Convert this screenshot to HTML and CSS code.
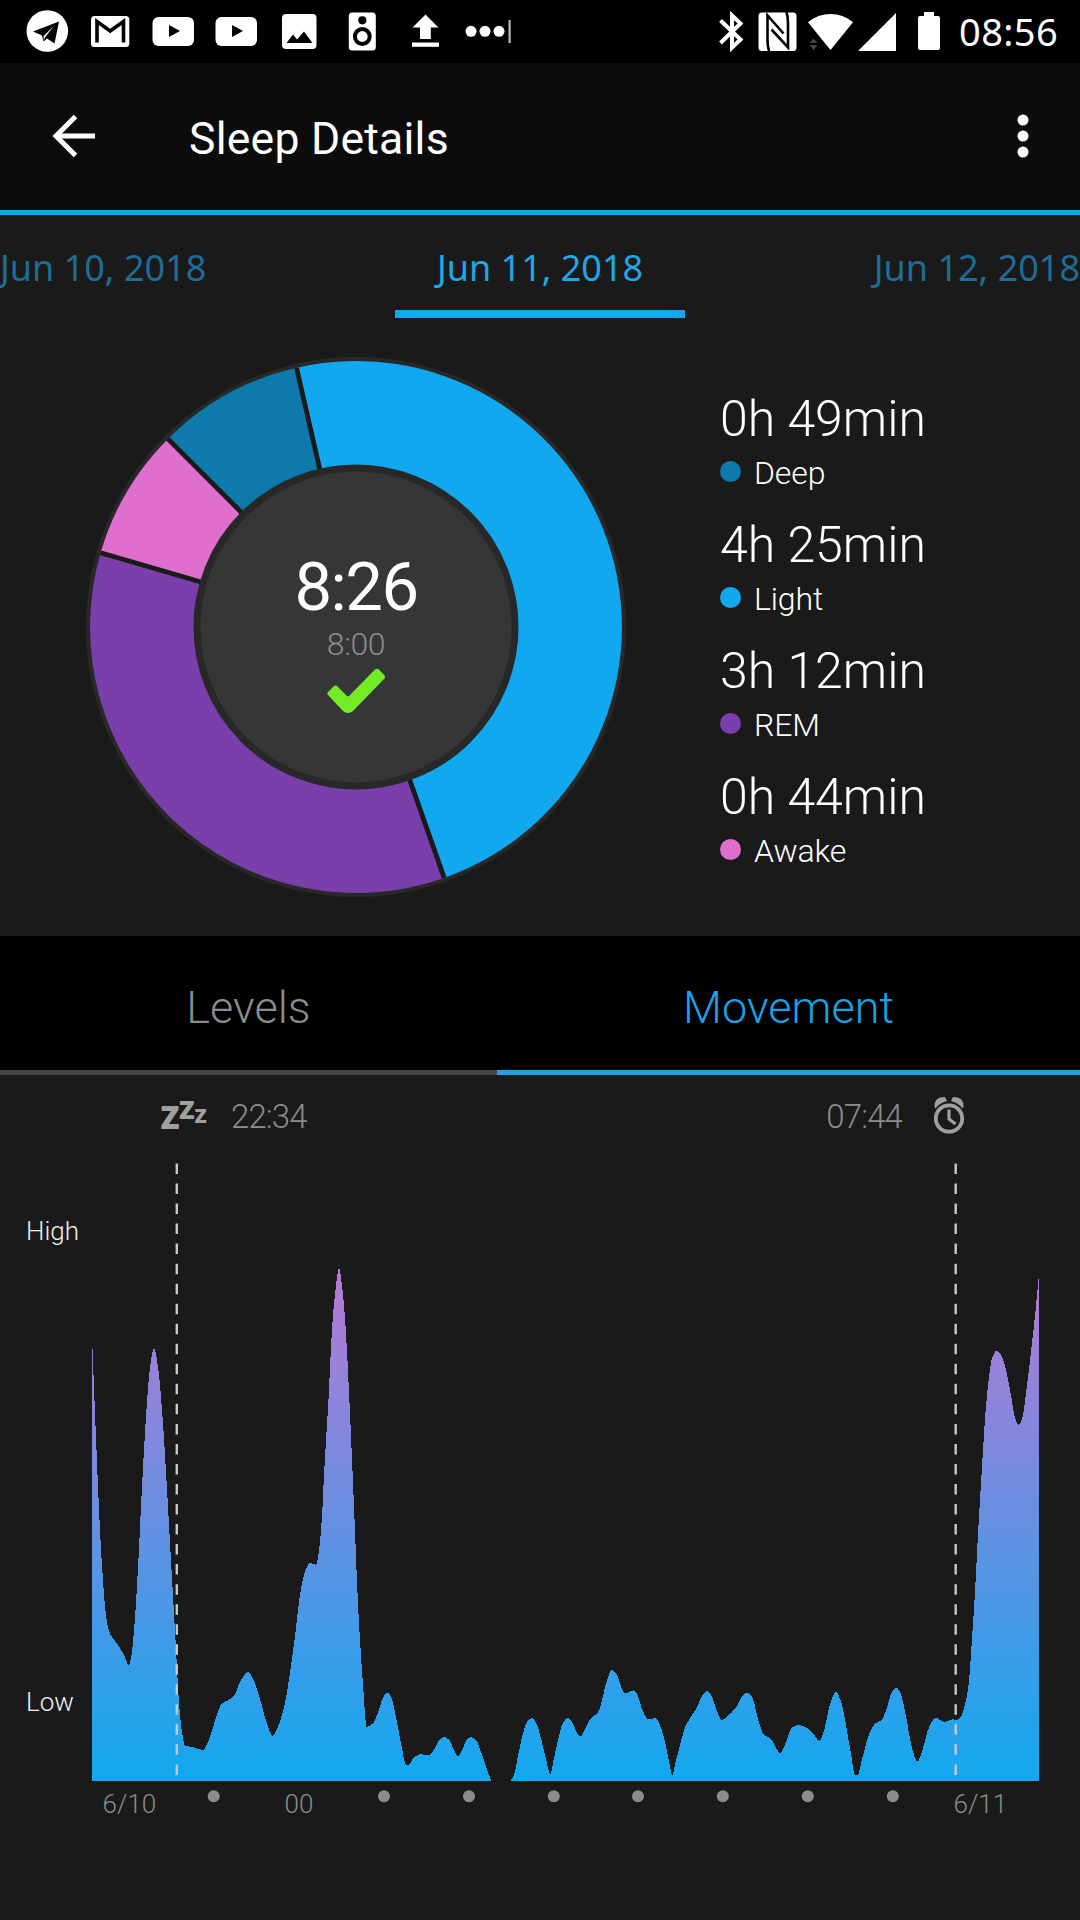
FILE: index.html
```html
<!DOCTYPE html>
<html lang="en">
<head>
    <meta charset="UTF-8">
    <meta name="viewport" content="width=device-width, initial-scale=1.0">
    <title>Sleep Details</title>
    <link rel="stylesheet" href="styles.css">
</head>
<body>
    <div class="status-bar">
        <svg class="status-icons" width="520" height="63" viewBox="0 0 520 63" fill="#fff">
            <!-- telegram -->
            <circle cx="47.3" cy="31" r="20.8"/>
            <path d="M33 31.5 L59 21.5 L54.5 43.5 L47 38.5 L43.5 41.5 L42 35.5 Z" fill="#000"/>
            <path d="M43.6 36 L54 26 L45 37.2 L43.8 40.5 Z"/>
            <!-- mail -->
            <rect x="91" y="16" width="38.3" height="31" rx="3.5"/>
            <path d="M97 42.5 V21.5 L110.2 31 L123.5 21.5 V42.5" fill="none" stroke="#000" stroke-width="3.6"/>
            <!-- video -->
            <rect x="152.5" y="17" width="41.5" height="29" rx="6"/>
            <path d="M169 25 L180 31 L169 37 Z" fill="#000"/>
            <rect x="215.5" y="17" width="41.5" height="29" rx="6"/>
            <path d="M232 25 L243 31 L232 37 Z" fill="#000"/>
            <!-- picture -->
            <rect x="282" y="14" width="34.5" height="35" rx="4"/>
            <path d="M286.5 43 L293 34.5 L297 39.5 L304 31.5 L312.5 43 Z" fill="#000"/>
            <!-- speaker -->
            <rect x="348.8" y="12.5" width="27" height="38" rx="3.5"/>
            <circle cx="362.3" cy="20.3" r="4.1" fill="#000"/>
            <circle cx="362.3" cy="36.5" r="7.4" stroke="#000" stroke-width="4"/>
            <!-- upload -->
            <path d="M425.5 14.5 L438.5 27.5 H430.8 V39 H420 V27.5 H412.5 Z"/>
            <rect x="412" y="42.5" width="27" height="4.3"/>
            <!-- overflow -->
            <circle cx="471" cy="31.3" r="5.5"/>
            <circle cx="485" cy="31.3" r="5.5"/>
            <circle cx="499" cy="31.3" r="5.5"/>
            <rect x="508.5" y="20" width="2.2" height="23" fill="#bbb"/>
        </svg>
        <svg class="status-icons" width="240" height="63" viewBox="710 0 240 63" fill="#fff">
            <!-- bluetooth -->
            <path d="M720.5 20.5 L740.5 39.5 L732 47.5 V15.5 L740.5 23.5 L720.5 43" fill="none" stroke="#fff" stroke-width="4"/>
            <!-- nfc -->
            <rect x="758.5" y="12.5" width="38" height="38.5" rx="3.5"/>
            <path d="M769 51 Q767.5 46 767.5 40 V15.5 L783.5 33.5 M786.5 12 Q788 17 788 23 V47.5 L771.5 29.5" fill="none" stroke="#000" stroke-width="2.6"/>
            <!-- wifi -->
            <path d="M808 22.3 Q818 14 830.5 14 Q843 14 853 22.3 L830.5 50 Z"/>
            <path d="M813.5 38.5 L817.5 43 H809.5 Z M809.5 45 H817.5 L813.5 50 Z" fill="#444"/>
            <!-- signal -->
            <path d="M896 13 V51 H858 Z"/>
            <!-- battery -->
            <path d="M924 12 H934 V16 H938 Q940 16 940 18 V48 Q940 50 938 50 H920 Q918 50 918 48 V18 Q918 16 920 16 H924 Z"/>
        </svg>
        <span class="clock">08:56</span>
    </div>

    <header class="app-bar">
        <svg class="back" width="44" height="44" viewBox="0 0 44 44" fill="none" stroke="#fff" stroke-width="5">
            <path d="M43 22 H5 M23.5 2.5 L4 22 L23.5 41.5"/>
        </svg>
        <h1 class="title">Sleep Details</h1>
        <svg class="menu" width="12" height="44" viewBox="0 0 12 44" fill="#fff">
            <circle cx="6" cy="6" r="5.5"/>
            <circle cx="6" cy="22" r="5.5"/>
            <circle cx="6" cy="38" r="5.5"/>
        </svg>
    </header>

    <nav class="dates">
        <span class="date">Jun 10, 2018</span>
        <span class="date active">Jun 11, 2018</span>
        <span class="date">Jun 12, 2018</span>
    </nav>

    <section class="summary">
        <div class="donut">
            <svg class="donut-chart" width="540" height="540" viewBox="0 0 540 540">
                <circle cx="270" cy="270" r="270" fill="#282828"/>
                <path class="light" d="M270 270 L210.5 10.7 A266 266 0 0 1 358.2 520.9 Z"/>
                <path class="rem" d="M270 270 L358.2 520.9 A266 266 0 0 1 14.6 195.8 Z"/>
                <path class="awake" d="M270 270 L14.6 195.8 A266 266 0 0 1 81.9 81.9 Z"/>
                <path class="deep" d="M270 270 L81.9 81.9 A266 266 0 0 1 210.5 10.7 Z"/>
                <path d="M270 270 L210.5 10.7 M270 270 L358.2 520.9 M270 270 L14.6 195.8 M270 270 L81.9 81.9" stroke="#1a1a1a" stroke-width="4.8"/>
                <circle cx="270" cy="270" r="159" fill="#363636" stroke="#282828" stroke-width="7"/>
            </svg>
            <div class="donut-text">
                <span class="total">8:26</span>
                <span class="goal">8:00</span>
                <svg class="check" width="58" height="46" viewBox="0 0 58 46">
                    <path d="M1 24 L7 18 Q8.5 17 10 18 L20 28 Q21 28.5 22 28 L48 1.5 Q50 0 52 1.5 L57.5 7.5 Q58.5 9 57.5 10.5 L26 43 Q20.5 47 16 43 L1 27 Q-.5 25.5 1 24 Z" fill="#73eb25"/>
                </svg>
            </div>
        </div>
        <ul class="legend">
            <li>
                <div class="value">0h 49min</div>
                <div class="label"><i class="dot deep"></i>Deep</div>
            </li>
            <li>
                <div class="value">4h 25min</div>
                <div class="label"><i class="dot light"></i>Light</div>
            </li>
            <li>
                <div class="value">3h 12min</div>
                <div class="label"><i class="dot rem"></i>REM</div>
            </li>
            <li>
                <div class="value">0h 44min</div>
                <div class="label"><i class="dot awake"></i>Awake</div>
            </li>
        </ul>
    </section>

    <nav class="tabs">
        <span class="tab">Levels</span>
        <span class="tab active">Movement</span>
    </nav>

    <div class="times">
        <svg class="zzz" width="50" height="40" viewBox="0 0 50 40">
            <text x="0.5" y="33" font-size="31">Z</text>
            <text x="19" y="22.5" font-size="25.5">Z</text>
            <text x="34.5" y="27" font-size="20">Z</text>
        </svg>
        <span class="start">22:34</span>
        <span class="end">07:44</span>
        <svg class="alarm" width="32" height="40" viewBox="0 0 32 40" fill="none" stroke="#a0a0a0">
            <circle cx="16" cy="22.5" r="13.2" stroke-width="3.8"/>
            <path d="M16 13.5 V23 L22.5 28" stroke-width="3.2"/>
            <path d="M1.5 11 Q1 .5 12 1 L14 5 Q6 7 2.5 12.5 Z M30.5 11 Q31 .5 20 1 L18 5 Q26 7 29.5 12.5 Z" fill="#a0a0a0" stroke="none"/>
        </svg>
    </div>

    <svg class="movement" width="1080" height="680" viewBox="0 1155 1080 680">
        <defs>
            <linearGradient id="level" gradientUnits="userSpaceOnUse" x1="0" y1="1269" x2="0" y2="1781">
                <stop offset="0" stop-color="#b878d4"/>
                <stop offset="1" stop-color="#12a8ef"/>
            </linearGradient>
        </defs>
        <path id="area" fill="url(#level)" shape-rendering="crispEdges"/>
        <path class="marker" d="M176.8 1163.5 V1775 M955.7 1163.5 V1775"/>
        <g class="ylabels">
            <text x="26" y="1240">High</text>
            <text x="26" y="1711">Low</text>
        </g>
        <g class="xlabels">
            <text x="102.5" y="1813">6/10</text>
            <text x="284.5" y="1813">00</text>
            <text x="953.5" y="1813">6/11</text>
        </g>
        <g id="ticks" class="ticks"></g>
    </svg>

    <script>
        const baseline = 1781;
        // x, y pairs, one list for each stretch of recorded movement
        const stretches = [
            [92,1335, 94,1388, 96.7,1454.6, 99.3,1515.6, 102,1565.6, 105,1606, 107.7,1626, 110.7,1635, 116.7,1643, 123.3,1653.6, 129,1665,
             131.7,1653.6, 135,1617.4, 138.3,1562, 142.3,1480.5, 146.7,1406.5, 150,1367.6, 154,1348, 158.3,1369.5, 162.3,1414, 166.7,1484,
             171.7,1573, 175.7,1643.3, 179,1702.4, 182.3,1734, 185.3,1746, 191.7,1746.8, 202.7,1750, 208.3,1741.3, 215,1721, 221.7,1703.6,
             228.3,1700.2, 234,1695.8, 240,1682, 247.7,1672, 253.3,1679.5, 260,1698.7, 266.7,1722.8, 272.7,1735.7, 279,1724, 285,1702.4,
             290,1672.8, 295,1636, 300,1595, 305,1571.8, 310,1563, 316,1565, 318.7,1552.6, 321.7,1521, 324.3,1469.4, 328.3,1402.8,
             332.3,1325, 335.7,1288, 339,1268, 342.3,1288, 345.7,1328.8, 350,1414, 354,1506.4, 358.3,1610, 362.7,1680, 366.7,1727,
             373.3,1723, 378.3,1711.7, 383.3,1697, 387.7,1692.5, 391.7,1698.7, 396.7,1721, 401.7,1746.8, 406,1765, 408.7,1765, 413.3,1758,
             420,1754.2, 429,1755, 435,1748, 440,1739.4, 444.3,1737, 449.3,1740, 454,1750.5, 458,1756, 462.7,1748.7, 466.7,1740,
             471,1737, 476,1740, 481.7,1754, 486.7,1769, 491,1780],
            [511,1780, 514,1775, 518.5,1753.3, 523,1733.3, 527.7,1720.7, 531.8,1718, 536,1722.7, 541.4,1740, 546.2,1760, 550.3,1774.7,
             553.6,1760, 558.4,1738.3, 563,1722.7, 568,1718, 572.5,1722.7, 577,1733.3, 580.6,1736.3, 585,1729.3, 590.6,1718.7, 598,1712,
             601.7,1701.7, 606.5,1681.7, 612,1670, 616.5,1674, 621,1686.7, 625,1693, 628.7,1692.3, 633.2,1690.3, 637,1694, 642.4,1710,
             648,1719, 655.4,1718.3, 660.2,1725.7, 665.7,1745, 669.4,1763.3, 672.4,1775.7, 675.3,1763.3, 680.5,1743.3, 685,1727.3,
             690.5,1717.3, 696.8,1707.7, 701.6,1696.7, 707,1691, 711.6,1695.7, 716.4,1709.3, 722,1720, 727.5,1716, 736,1707.7,
             742.3,1696, 747,1692.3, 752.3,1697.3, 757.8,1718.3, 763.7,1734.7, 770.8,1738.7, 776.7,1749.3, 780,1753, 784.8,1745,
             791.5,1728.3, 797,1725, 803.3,1726, 812.6,1732.7, 819.6,1741, 823.7,1731.7, 830.3,1703.3, 836,1692, 841,1701.7,
             846.6,1728.3, 851.4,1756.7, 855,1775, 857.7,1775, 861.8,1760, 870,1731.7, 875.5,1723.3, 881,1720.7, 886.5,1709.3,
             892,1691.7, 896.5,1688, 900.6,1693.3, 905.8,1715, 911.3,1745, 917.3,1761.7, 922.4,1750, 929,1727.3, 935.7,1718,
             945,1722, 953,1719.3, 956.7,1720.2, 960.7,1717, 965,1704.3, 968.7,1684, 971.7,1643, 975,1591.5, 978.3,1528.6,
             982.3,1462, 985.7,1410, 989,1377, 992.3,1357.6, 996.7,1350.6, 1002.3,1357.6, 1006.7,1373, 1011,1395.4, 1015,1417.6,
             1018.7,1425, 1022.3,1417.6, 1026.7,1388, 1031.7,1345.4, 1035,1315.8, 1039,1274]
        ];

        // slope at point i, flat on peaks and dips
        function slope(s, i) {
            if (i < 2 || i > s.length - 4) return null;
            let a = (s[i + 1] - s[i - 1]) / (s[i] - s[i - 2]);
            let b = (s[i + 3] - s[i + 1]) / (s[i + 2] - s[i]);
            return a * b <= 0 ? 0 : 2 * a * b / (a + b);
        }

        let d = "";
        stretches.forEach(function(s) {
            d += `M${s[0]} ${baseline}V${s[1]}`;
            for (let i = 0; i < s.length - 2; i += 2) {
                let h = (s[i + 2] - s[i]) / 3;
                let line = (s[i + 3] - s[i + 1]) / (s[i + 2] - s[i]);
                let m0 = slope(s, i) ?? line;
                let m1 = slope(s, i + 2) ?? line;
                d += `C${s[i] + h} ${s[i + 1] + m0 * h} ${s[i + 2] - h} ${s[i + 3] - m1 * h} ${s[i + 2]} ${s[i + 3]}`;
            }
            d += `V${baseline}Z`;
        });
        document.getElementById("area").setAttribute("d", d);

        const ticks = [213.7, 384, 469, 553.8, 638, 722.8, 807.8, 892.8];
        document.getElementById("ticks").innerHTML = ticks.map(x => `<circle cx="${x}" cy="1796.3" r="6"/>`).join("");
    </script>
</body>
</html>
```
FILE: styles.css
```css
* {
    box-sizing: border-box;
}
body {
    margin: 0;
    width: 1080px;
    height: 1920px;
    overflow: hidden;
    background: #1a1a1a;
    color: #fff;
    font-family: Roboto, sans-serif;
    font-weight: 300;
}
svg {
    display: block;
    flex: none;
}
.status-bar {
    display: flex;
    height: 63px;
    background: #000;
}
.status-icons + .status-icons {
    margin-left: 190px;
}
.clock {
    margin-left: 9px;
    font: 400 38px/62px "Noto Sans", sans-serif;
    letter-spacing: .4px;
}
.app-bar {
    display: flex;
    align-items: center;
    height: 152px;
    padding: 0 51.5px 0 52px;
    background: #0c0c0c;
    border-bottom: 5px solid #19a3e6;
}
.back,
.menu {
    margin-top: -1px;
}
.title {
    margin: 4px 0 0 93px;
    font-size: 44.5px;
    font-weight: 400;
    letter-spacing: .25px;
}
.menu {
    margin-left: auto;
}
.dates {
    display: flex;
    justify-content: space-between;
    height: 103px;
    font: 400 36px/105px "Noto Sans", sans-serif;
    color: #1f6d95;
}
.date.active {
    width: 290px;
    text-align: center;
    color: #1fa7e6;
    border-bottom: 8px solid #12a8ef;
}
.summary {
    display: flex;
    height: 618px;
    padding: 39px 0 0 86px;
}
.donut {
    position: relative;
    width: 540px;
    height: 540px;
}
.donut-text {
    position: absolute;
    inset: 0;
    display: flex;
    flex-direction: column;
    align-items: center;
    padding-top: 191px;
}
.total {
    font-size: 67px;
    font-weight: 400;
    line-height: 78px;
    letter-spacing: -1.5px;
}
.goal {
    margin-top: -1px;
    font-size: 32px;
    line-height: 38px;
    letter-spacing: -.4px;
    color: #8c8c8c;
}
.check {
    margin-top: 5px;
}
.legend {
    margin: 33px 0 0 94px;
    padding: 0;
    list-style: none;
}
.legend li {
    height: 126px;
}
.value {
    font-size: 50px;
    line-height: 58px;
}
.label {
    display: flex;
    align-items: center;
    height: 50px;
    font-size: 32px;
    letter-spacing: -.1px;
}
.dot {
    width: 21px;
    height: 21px;
    margin: -3px 13px 0 0;
    border-radius: 50%;
}
.deep {
    fill: #0e7aab;
    background: #0e7aab;
}
.light {
    fill: #12a8ef;
    background: #12a8ef;
}
.rem {
    fill: #7a3fab;
    background: #7a3fab;
}
.awake {
    fill: #e06ecd;
    background: #e06ecd;
}
.tabs {
    display: flex;
    height: 139px;
    background: #000;
    font-size: 45px;
    line-height: 143px;
    text-align: center;
}
.tab {
    width: 497px;
    color: #8c8c8c;
    border-bottom: 5px solid #444;
}
.tab.active {
    flex: 1;
    color: #19a3e6;
    border-bottom-color: #19a3e6;
}
.times {
    display: flex;
    height: 80px;
    padding: 21px 115px 0 160px;
    font-size: 33px;
    line-height: 42px;
    letter-spacing: -.9px;
    color: #8c8c8c;
}
.zzz {
    overflow: visible;
    fill: #a0a0a0;
    font-family: "Open Sans", sans-serif;
    font-weight: 800;
}
.start {
    margin-left: 21px;
}
.end {
    margin-left: auto;
}
.alarm {
    margin-left: 31px;
}
.marker {
    fill: none;
    stroke: #c8c8c8;
    stroke-width: 2.4;
    stroke-dasharray: 10.5 9.53;
}
.ylabels {
    font-size: 26px;
    fill: #f0f0f0;
}
.xlabels {
    font-size: 26px;
    fill: #8c8c8c;
}
.ticks {
    fill: #8c8c8c;
}
```
